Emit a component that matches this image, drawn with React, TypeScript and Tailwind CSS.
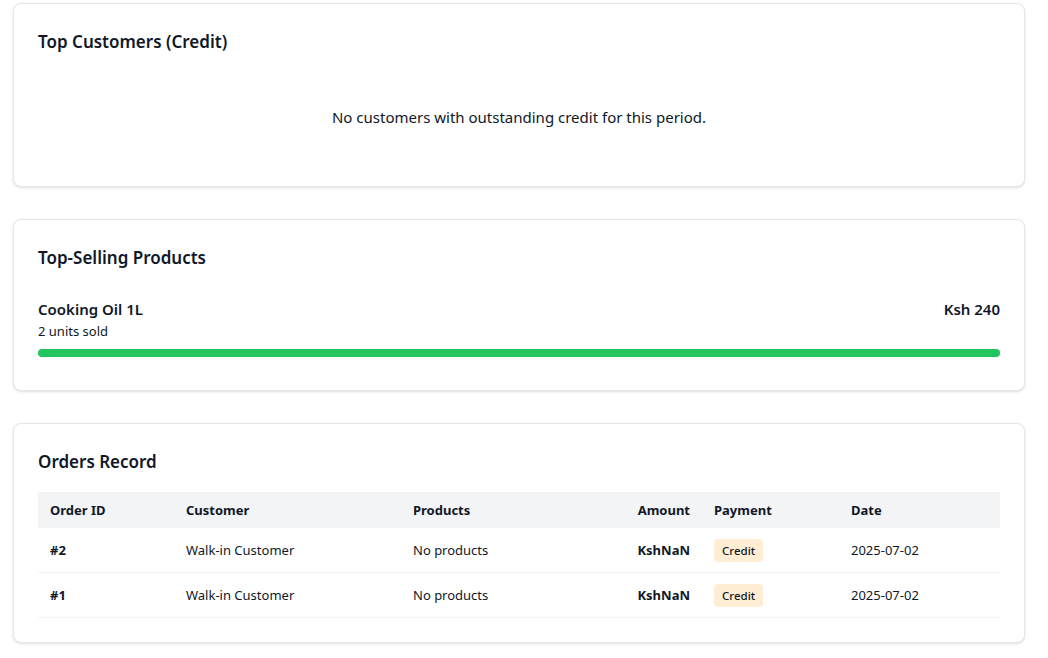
const orders = [
  { id: 2, customer: 'Walk-in Customer', products: 'No products', amount: 'KshNaN', payment: 'Credit', date: '2025-07-02' },
  { id: 1, customer: 'Walk-in Customer', products: 'No products', amount: 'KshNaN', payment: 'Credit', date: '2025-07-02' },
]

const Card: React.FC<{ title: string; children: React.ReactNode }> = ({ title, children }) => (
  <div className="bg-white border border-gray-200 rounded-lg shadow-sm p-6">
    <h2 className="text-[17px] font-semibold leading-7 text-gray-900">{title}</h2>
    {children}
  </div>
)

export default function App() {
  return (
    <div
      className="min-h-screen bg-white px-[13px] pt-[3px] pb-4 text-gray-900"
      style={{ fontFamily: '"Segoe UI", "Noto Sans", sans-serif' }}
    >
      <div className="flex flex-col gap-8 w-[1012px]">
        <Card title="Top Customers (Credit)">
          <p className="mt-4 pt-[33px] pb-[33px] text-center text-[15px] leading-6">
            No customers with outstanding credit for this period.
          </p>
        </Card>

        <Card title="Top-Selling Products">
          <div className="mt-[25px] mb-[9px]">
            <div className="flex justify-between items-start">
              <div>
                <div className="text-[15px] font-semibold leading-6">Cooking Oil 1L</div>
                <div className="text-[13px] leading-5">2 units sold</div>
              </div>
              <div className="text-[15px] font-semibold leading-6">Ksh 240</div>
            </div>
            <div className="mt-2 h-2 w-full rounded-full bg-gray-200">
              <div className="h-2 rounded-full bg-[#22c55e]" style={{ width: '100%' }} />
            </div>
          </div>
        </Card>

        <Card title="Orders Record">
          <table className="mt-4 w-full text-[13px] table-fixed border-collapse">
            <thead className="bg-gray-100">
              <tr className="text-left">
                <th className="w-[136px] px-3 py-2 font-bold leading-5">Order ID</th>
                <th className="w-[227px] px-3 py-2 font-bold leading-5">Customer</th>
                <th className="w-[199px] px-3 py-2 font-bold leading-5">Products</th>
                <th className="w-[102px] px-3 py-2 font-bold leading-5 text-right">Amount</th>
                <th className="w-[137px] px-3 py-2 font-bold leading-5">Payment</th>
                <th className="px-3 py-2 font-bold leading-5">Date</th>
              </tr>
            </thead>
            <tbody>
              {orders.map(o => (
                <tr key={o.id} className="border-b border-gray-100">
                  <td className="px-3 py-3 leading-5 font-bold">#{o.id}</td>
                  <td className="px-3 py-3 leading-5">{o.customer}</td>
                  <td className="px-3 py-3 leading-5">{o.products}</td>
                  <td className="px-3 py-3 leading-5 font-bold text-right">{o.amount}</td>
                  <td className="px-3 py-3 leading-5">
                    <span className="rounded bg-orange-100 px-2 py-1 text-[11.5px] leading-4 font-medium">
                      {o.payment}
                    </span>
                  </td>
                  <td className="px-3 py-3 leading-5">{o.date}</td>
                </tr>
              ))}
            </tbody>
          </table>
        </Card>
      </div>
    </div>
  )
}
